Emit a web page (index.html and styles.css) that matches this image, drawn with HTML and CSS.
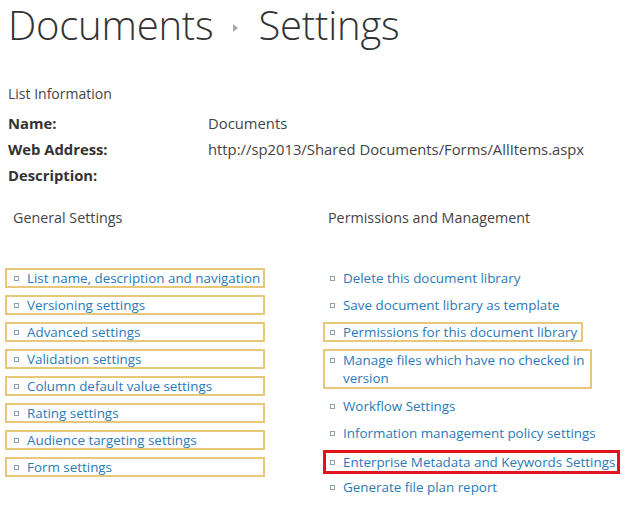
FILE: index.html
```html
<!DOCTYPE html>
<html>
<head>
<meta charset="utf-8">
<link rel="stylesheet" href="styles.css">
</head>
<body>
<div class="page">
  <h1 class="title"><span>Documents</span><span class="crumb-sep"></span><span>Settings</span></h1>
  <div class="list-info">List Information</div>
  <div class="info-grid">
    <div class="info-label">Name:</div><div class="info-value">Documents</div>
    <div class="info-label">Web Address:</div><div class="info-value">http://sp2013/Shared Documents/Forms/AllItems.aspx</div>
    <div class="info-label">Description:</div><div class="info-value"></div>
  </div>
  <div class="columns">
    <div class="col col-left">
      <div class="col-head">General Settings</div>
      <ul class="links">
        <li class="item boxed full"><span class="bullet"></span><a>List name, description and navigation</a></li>
        <li class="item boxed full"><span class="bullet"></span><a>Versioning settings</a></li>
        <li class="item boxed full"><span class="bullet"></span><a>Advanced settings</a></li>
        <li class="item boxed full"><span class="bullet"></span><a>Validation settings</a></li>
        <li class="item boxed full"><span class="bullet"></span><a>Column default value settings</a></li>
        <li class="item boxed full"><span class="bullet"></span><a>Rating settings</a></li>
        <li class="item boxed full"><span class="bullet"></span><a>Audience targeting settings</a></li>
        <li class="item boxed full"><span class="bullet"></span><a>Form settings</a></li>
      </ul>
    </div>
    <div class="col col-right">
      <div class="col-head">Permissions and Management</div>
      <ul class="links">
        <li class="item"><span class="bullet"></span><a>Delete this document library</a></li>
        <li class="item"><span class="bullet"></span><a>Save document library as template</a></li>
        <li class="item boxed fit"><span class="bullet"></span><a>Permissions for this document library</a></li>
        <li class="item boxed manage"><span class="bullet"></span><a>Manage files which have no checked in<br>version</a></li>
        <li class="item"><span class="bullet"></span><a>Workflow Settings</a></li>
        <li class="item"><span class="bullet"></span><a>Information management policy settings</a></li>
        <li class="item red"><span class="bullet"></span><a>Enterprise Metadata and Keywords Settings</a></li>
        <li class="item"><span class="bullet"></span><a>Generate file plan report</a></li>
      </ul>
    </div>
  </div>
</div>
</body>
</html>
```
FILE: styles.css
```css
body {
  margin: 0;
  background: #fff;
  font-family: "Open Sans", "Noto Sans", sans-serif;
  color: #444;
}
.page {
  padding: 0 0 0 8px;
}
.title {
  margin: 0;
  font-size: 40px;
  font-weight: 300;
  line-height: 50px;
  color: #333;
  display: flex;
  align-items: center;
  letter-spacing: -0.2px;
}
.crumb-sep {
  width: 0;
  height: 0;
  border-left: 5px solid #a9a9a9;
  border-top: 4px solid transparent;
  border-bottom: 4px solid transparent;
  margin: 6px 20px 0 20px;
}
.list-info {
  margin-top: 34px;
  font-size: 14px;
  line-height: 20px;
}
.info-grid {
  margin-top: 6px;
  display: grid;
  grid-template-columns: 200px auto;
  grid-auto-rows: 26px;
  align-items: center;
  font-size: 14.8px;
}
.info-label {
  font-weight: 700;
  color: #333;
}
.columns {
  display: flex;
  margin-top: 20px;
  margin-left: -3px;
}
.col-left {
  width: 260px;
}
.col-right {
  margin-left: 58px;
  width: 305px;
}
.col-head {
  font-size: 14.3px;
  line-height: 20px;
  padding-left: 8px;
}
.col-right .col-head {
  padding-left: 5px;
}
.links {
  list-style: none;
  margin: 40px 0 0 0;
  padding: 0;
}
.item {
  display: flex;
  align-items: flex-start;
  box-sizing: border-box;
  border: 2px solid transparent;
  line-height: 16px;
  font-size: 13.4px;
  padding: 0 4px 0 7px;
  margin-bottom: 7px;
  color: #2a7ab9;
  white-space: nowrap;
}
.col-right .item {
  padding-left: 5px;
}
.item a {
  color: #2a7ab9;
}
.boxed {
  border-color: #e7c87a;
}
.full {
  width: 260px;
  padding-right: 0;
}
.fit {
  width: max-content;
}
.manage {
  width: 269px;
  line-height: 18px;
}
.manage .bullet {
  margin-top: 7px;
}
.red {
  width: 297px;
  border: 3px solid #e0141e;
  margin-top: 1px;
  margin-bottom: 3px;
  line-height: 18px;
}
.col-right .red {
  padding-left: 4px;
}
.red .bullet {
  margin-top: 7px;
}
.bullet {
  flex: none;
  width: 3px;
  height: 3px;
  border: 1px solid #8a9fb3;
  margin: 6px 8px 0 0;
}
```
